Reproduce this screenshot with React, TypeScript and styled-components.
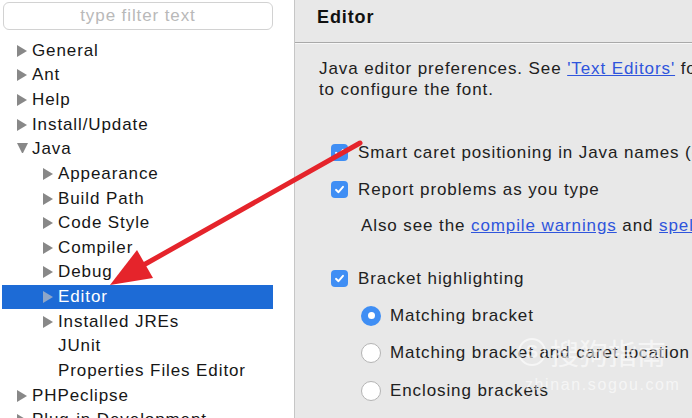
import { FC } from "react";
import styled, { createGlobalStyle } from "styled-components";

type TreeItem = {
  label: string;
  level: number;
  twisty: "closed" | "open" | "none";
  selected?: boolean;
};

const treeItems: TreeItem[] = [
  { label: "General", level: 0, twisty: "closed" },
  { label: "Ant", level: 0, twisty: "closed" },
  { label: "Help", level: 0, twisty: "closed" },
  { label: "Install/Update", level: 0, twisty: "closed" },
  { label: "Java", level: 0, twisty: "open" },
  { label: "Appearance", level: 1, twisty: "closed" },
  { label: "Build Path", level: 1, twisty: "closed" },
  { label: "Code Style", level: 1, twisty: "closed" },
  { label: "Compiler", level: 1, twisty: "closed" },
  { label: "Debug", level: 1, twisty: "closed" },
  { label: "Editor", level: 1, twisty: "closed", selected: true },
  { label: "Installed JREs", level: 1, twisty: "closed" },
  { label: "JUnit", level: 1, twisty: "none" },
  { label: "Properties Files Editor", level: 1, twisty: "none" },
  { label: "PHPeclipse", level: 0, twisty: "closed" },
  { label: "Plug-in Development", level: 0, twisty: "closed" },
];

const GlobalStyle = createGlobalStyle`
  body {
    margin: 0;
    font-family: "Liberation Sans", "Noto Sans CJK SC", sans-serif;
    background: #ffffff;
  }
`;

const CheckMark: FC = () => (
  <svg width="11" height="11" viewBox="0 0 11 11">
    <polyline
      points="2,5.8 4.5,8.2 9,2.8"
      fill="none"
      stroke="#fff"
      strokeWidth="1.9"
      strokeLinecap="round"
      strokeLinejoin="round"
    />
  </svg>
);

export default function App() {
  return (
    <>
      <GlobalStyle />
      <StRoot>
        <StSidebar>
          <StFilter>type filter text</StFilter>
          <StTree>
            {treeItems.map((item) => (
              <StRow key={item.label} $level={item.level} $selected={!!item.selected}>
                <StTwisty $kind={item.twisty} $selected={!!item.selected} />
                {item.label}
              </StRow>
            ))}
          </StTree>
        </StSidebar>

        <StPage>
          <StHeader>Editor</StHeader>
          <StBody>
            <StDesc>
              Java editor preferences. See <StLink>'Text Editors'</StLink> for the general text editor preferences.
              <br />
              to configure the font.
            </StDesc>

            <StOption $gapTop={34}>
              <StCheckbox><CheckMark /></StCheckbox>
              Smart caret positioning in Java names (overrides platform behavior)
            </StOption>
            <StOption>
              <StCheckbox><CheckMark /></StCheckbox>
              Report problems as you type
            </StOption>
            <StNote>
              Also see the <StLink>compile warnings</StLink> and <StLink>spelling preferences</StLink>
            </StNote>

            <StOption $gapTop={17}>
              <StCheckbox><CheckMark /></StCheckbox>
              Bracket highlighting
            </StOption>
            <StRadioRow>
              <StRadio $checked />
              Matching bracket
            </StRadioRow>
            <StRadioRow>
              <StRadio />
              Matching bracket and caret location
            </StRadioRow>
            <StRadioRow>
              <StRadio />
              Enclosing brackets
            </StRadioRow>
          </StBody>
        </StPage>

        <StWatermark>
          <StMarkTop>
            <StMarkLogo>S</StMarkLogo>
            搜狗指南
          </StMarkTop>
          <StMarkUrl>zhinan.sogou.com</StMarkUrl>
        </StWatermark>

        <StArrow width="692" height="418" viewBox="0 0 692 418">
          <line x1="360" y1="143" x2="140" y2="267" stroke="#e5242b" strokeWidth="5" strokeLinecap="round" />
          <polygon points="110,285 137,250 153,278" fill="#e5242b" />
        </StArrow>
      </StRoot>
    </>
  );
}

const StRoot = styled.div`
  position: relative;
  display: flex;
  width: 692px;
  height: 418px;
  overflow: hidden;
  letter-spacing: 0.9px;
`;

const StSidebar = styled.div`
  width: 295px;
  flex-shrink: 0;
  background: #ffffff;
  border-right: 1px solid #c6c6c6;
  padding-top: 2px;
  box-sizing: border-box;
`;

const StFilter = styled.div`
  margin-left: 3px;
  width: 270px;
  height: 28px;
  box-sizing: border-box;
  border: 1px solid #d2d2d2;
  border-radius: 6px;
  display: flex;
  align-items: center;
  justify-content: center;
  font-size: 17px;
  color: #b9b9b9;
`;

const StTree = styled.ul`
  list-style: none;
  margin: 8.5px 0 0 2px;
  padding: 0;
  width: 271px;
`;

const StRow = styled.li<{ $level: number; $selected: boolean }>`
  display: flex;
  align-items: center;
  height: 24.64px;
  padding-left: ${(p) => 15 + p.$level * 26}px;
  font-size: 17px;
  white-space: nowrap;
  color: ${(p) => (p.$selected ? "#ffffff" : "#161616")};
  background: ${(p) => (p.$selected ? "#1d6bd6" : "transparent")};
`;

const StTwisty = styled.span<{ $kind: "closed" | "open" | "none"; $selected: boolean }>`
  width: 10px;
  height: 12px;
  margin-right: 5px;
  flex-shrink: 0;
  box-sizing: border-box;
  ${(p) =>
    p.$kind === "closed"
      ? `border-left: 10px solid ${p.$selected ? "#8ea6c8" : "#888888"};
         border-top: 6px solid transparent;
         border-bottom: 6px solid transparent;`
      : p.$kind === "open"
      ? `border-top: 10px solid #888888;
         border-left: 5.5px solid transparent;
         border-right: 5.5px solid transparent;
         width: 11px;
         margin-right: 4px;`
      : ""}
`;

const StPage = styled.div`
  flex: 1;
  min-width: 0;
  background: #e8e8e8;
  overflow: hidden;
  white-space: nowrap;
  color: #212121;
`;

const StHeader = styled.div`
  height: 43px;
  box-sizing: border-box;
  padding: 6px 0 0 22px;
  line-height: 22px;
  font-size: 18px;
  font-weight: bold;
  color: #111111;
  border-bottom: 1px solid #a9a9a9;
  box-shadow: 0 1px 0 #f7f7f7;
`;

const StBody = styled.div`
  padding: 15px 0 0 24px;
`;

const StDesc = styled.div`
  font-size: 17px;
  line-height: 21px;
`;

const StLink = styled.span`
  color: #2f55dc;
  text-decoration: underline;
`;

const StOption = styled.div<{ $gapTop?: number }>`
  display: flex;
  align-items: center;
  height: 37px;
  margin-left: 12px;
  margin-top: ${(p) => p.$gapTop ?? 0}px;
  font-size: 17px;
`;

const StCheckbox = styled.span`
  width: 17px;
  height: 17px;
  flex-shrink: 0;
  margin-right: 10px;
  border-radius: 4px;
  background: #3f8ef4;
  display: flex;
  align-items: center;
  justify-content: center;
`;

const StNote = styled.div`
  display: flex;
  align-items: center;
  height: 35px;
  margin-left: 42px;
  font-size: 17px;
  white-space: pre;
`;

const StRadioRow = styled.div`
  display: flex;
  align-items: center;
  height: 37.5px;
  margin-left: 42px;
  font-size: 17px;
`;

const StRadio = styled.span<{ $checked?: boolean }>`
  width: 20px;
  height: 20px;
  flex-shrink: 0;
  margin-right: 9px;
  border-radius: 50%;
  box-sizing: border-box;
  display: flex;
  align-items: center;
  justify-content: center;
  background: ${(p) => (p.$checked ? "#3f8ef4" : "#ffffff")};
  border: ${(p) => (p.$checked ? "none" : "1px solid #b4b4b4")};
  &::after {
    content: "";
    display: ${(p) => (p.$checked ? "block" : "none")};
    width: 7px;
    height: 7px;
    border-radius: 50%;
    background: #ffffff;
  }
`;

const StWatermark = styled.div`
  position: absolute;
  left: 518px;
  top: 336px;
  color: rgba(255, 255, 255, 0.6);
  letter-spacing: 0;
  pointer-events: none;
`;

const StMarkTop = styled.div`
  display: flex;
  align-items: center;
  gap: 4px;
  font-size: 29px;
  line-height: 32px;
  font-family: "Noto Sans CJK SC", sans-serif;
`;

const StMarkLogo = styled.span`
  width: 28px;
  height: 28px;
  border: 2.5px solid rgba(255, 255, 255, 0.6);
  border-radius: 50%;
  box-sizing: border-box;
  display: flex;
  align-items: center;
  justify-content: center;
  font-size: 18px;
  font-weight: bold;
  font-family: "Liberation Sans", sans-serif;
`;

const StMarkUrl = styled.div`
  margin: 8px 0 0 7px;
  font-size: 16px;
  letter-spacing: 1.6px;
`;

const StArrow = styled.svg`
  position: absolute;
  left: 0;
  top: 0;
  pointer-events: none;
`;
